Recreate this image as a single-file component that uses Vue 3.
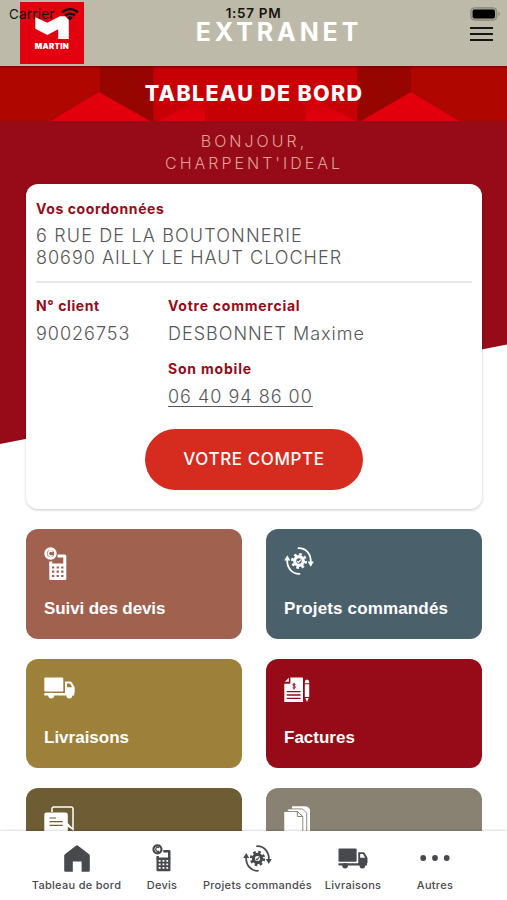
<script setup>
const tiles = [
  { label: 'Suivi des devis', icon: 'devis', tone: 'terracotta' },
  { label: 'Projets commandés', icon: 'projets', tone: 'slate' },
  { label: 'Livraisons', icon: 'truck', tone: 'gold' },
  { label: 'Factures', icon: 'invoice', tone: 'crimson' },
  { label: '', icon: 'chat', tone: 'bronze' },
  { label: '', icon: 'docs', tone: 'stone' },
]

const tabs = [
  { label: 'Tableau de bord', icon: 'home', slot: 'home' },
  { label: 'Devis', icon: 'devis', slot: 'devis' },
  { label: 'Projets commandés', icon: 'projets', slot: 'projets' },
  { label: 'Livraisons', icon: 'truck', slot: 'truck' },
  { label: 'Autres', icon: 'more', slot: 'more' },
]
</script>

<template>
  <div class="screen">
    <!-- Shared icon shapes -->
    <svg class="sprite" aria-hidden="true">
      <symbol id="i-devis" viewBox="0 0 24 34">
        <circle cx="6.5" cy="6.500" r="4.900" fill="none" stroke="currentColor" stroke-width="2.600" />
        <path d="M8.600 4.700a2.500 2.500 0 1 0 0 3.600" fill="none" stroke="currentColor" stroke-width="1.500" />
        <path d="M13.500 8.900h7.300v9M6.800 14.500v4" fill="none" stroke="currentColor" stroke-width="3" stroke-linejoin="round" />
        <path fill-rule="evenodd" fill="currentColor" d="M5.300 16.500h17v15.400q0 1.100-1.100 1.100H6.400q-1.100 0-1.100-1.100zM8 19.400v2.200h2.300v-2.200zM12.600 19.400v2.200h2.300v-2.200zM17.200 19.400v2.200h2.300v-2.200zM8 23.600v2.200h2.300v-2.200zM12.600 23.600v2.200h2.300v-2.200zM17.200 23.600v2.200h2.300v-2.200zM8 27.900v2.200h2.300v-2.200zM12.600 27.900v2.200h2.300v-2.200zM17.200 27.900v2.200h2.300v-2.200z" />
      </symbol>
      <symbol id="i-projets" viewBox="0 0 30 28">
        <g fill="none" stroke="currentColor" stroke-width="1.800" stroke-linecap="round">
          <path d="M14.500 1.200C22 1 27 7 26.800 15" />
          <path d="M15.500 26.800C8 27 3 21 3.200 13" />
        </g>
        <path fill="currentColor" d="M23.600 14.600h6.200l-3.100 5.200zM.2 13.400h6.200L3.300 8.200z" />
        <circle cx="15" cy="14" r="4.300" fill="none" stroke="currentColor" stroke-width="3.200" />
        <circle cx="15" cy="14" r="6.700" fill="none" stroke="currentColor" stroke-width="2.600" stroke-dasharray="2.630 2.630" />
        <path d="M13.200 14.200l1.300 1.200 2.400-2.800" fill="none" stroke="currentColor" stroke-width="1.200" />
      </symbol>
      <symbol id="i-truck" viewBox="0 0 31 22">
        <rect x=".3" y=".5" width="19" height="14" rx="1.200" fill="currentColor" />
        <path fill="currentColor" fill-rule="evenodd" d="M21 4.400h5.200q1.100 0 1.700 1l2.300 4q.5.800.5 1.800v4.600h-.5v2.600h-2a2.900 2.900 0 0 1-5.700 0H10a2.900 2.900 0 0 1-5.600 0H.3v-2.300H21zM23 6.400v3.800h5.200l-1.900-3.300q-.3-.5-.8-.5z" />
        <circle cx="7.200" cy="18.600" r="2.900" fill="currentColor" />
        <circle cx="25.300" cy="18.600" r="2.900" fill="currentColor" />
      </symbol>
      <symbol id="i-invoice" viewBox="0 0 26 26">
        <path fill="currentColor" d="M6.400.4h12q.6 0 .6.600v24H.3V6.700h5.200q.9 0 .9-.9zM4.900.8v4H.9z" />
        <g stroke="var(--hole)" stroke-width="1.300" fill="none">
          <path d="M2.800 14.600h13.800M2.800 18h13.800M2.800 21.400h13.800" />
          <path d="M11.400 7.300q-2.600-.9-2.600.6 0 .9 1.400 1.200 1.400.4 1.200 1.300-.3 1.300-2.800.4M10.100 5.800v6.600" stroke-width="1" />
        </g>
        <path fill="currentColor" d="M20.800 5.200q0-2.600 2.200-2.600t2.200 2.600v1h-4.400zM20.800 7.300h4.400V20h-4.400zM21.200 21h3.600L23 25z" />
      </symbol>
      <symbol id="i-chat" viewBox="0 0 31 32">
        <path d="M8 6V2.800Q8 1 9.800 1H27Q29 1 29 3v20.500L23 18" fill="none" stroke="currentColor" stroke-width="1.500" />
        <path fill="currentColor" d="M2.500 6.500h19q2.300 0 2.300 2.300V17l5.200 6-5.200-2v11H.3V8.800q0-2.300 2.200-2.300z" />
        <path d="M5.500 12h6.500M5.500 15.700h13.200M5.500 19.400h13.200" stroke="var(--hole)" stroke-width="1.200" />
      </symbol>
      <symbol id="i-docs" viewBox="0 0 27 32">
        <path fill="currentColor" d="M8 .3h13.200Q26 1 26 4.800V32H8z" />
        <path fill="currentColor" stroke="var(--hole)" stroke-width=".9" d="M3.800 2.900h14.700l4.200 4.300V33H3.800z" />
        <path fill="currentColor" stroke="var(--hole)" stroke-width=".9" d="M-.2 5.500h13.500l5.500 5V33H-.2z" />
        <path d="M13.300 5.500v5h5.300z" fill="currentColor" stroke="var(--hole)" stroke-width="1" />
      </symbol>
      <symbol id="i-home" viewBox="0 0 26 27">
        <path fill="currentColor" d="M11.900.7q1.100-.8 2.200 0l11 8.500q.7.600.7 1.500v14.800q0 1.200-1.200 1.200h-7V16.500H8.800v10.200H1.400Q.2 26.700.2 25.500V10.700q0-.9.700-1.500z" />
      </symbol>
      <symbol id="i-more" viewBox="0 0 30 8">
        <circle cx="3.200" cy="4" r="2.900" fill="currentColor" />
        <circle cx="15" cy="4" r="2.900" fill="currentColor" />
        <circle cx="26.700" cy="4" r="2.900" fill="currentColor" />
      </symbol>
    </svg>

    <header class="topbar">
      <div class="logo">
        <svg class="logo-mark" viewBox="0 0 34 23">
          <path fill="#fff" d="M.3 1.200l12 5.500L25 .2h5.200L33.800 3.800V23H23.200V13.300L12.300 19 .3 12.800z" />
        </svg>
        <span class="logo-name">MARTIN</span>
      </div>
      <h1 class="app-title">EXTRANET</h1>
      <button class="burger" aria-label="Menu"><i></i><i></i><i></i></button>
      <div class="status">
        <span class="carrier">Carrier</span>
        <svg class="wifi" viewBox="0 0 18 14">
          <g fill="none" stroke="#111" stroke-width="2.300">
            <path d="M1.100 5.400a11.300 11.300 0 0 1 15.800 0M4.100 8.600a7 7 0 0 1 9.800 0" />
          </g>
          <path fill="#111" d="M6.200 10.700a4 4 0 0 1 5.600 0L9 13.500z" />
        </svg>
        <span class="clock">1:57 PM</span>
        <svg class="battery" viewBox="0 0 31 14">
          <rect x=".8" y=".8" width="26" height="12.400" rx="3.600" fill="#a5a195" stroke="#858277" stroke-width="1" />
          <rect x="2.600" y="2.600" width="22.400" height="8.800" rx="1.800" fill="#000" />
          <path d="M28.500 4.500q2.600 2.500 0 5z" fill="#858277" />
        </svg>
      </div>
    </header>

    <div class="banner">
      <svg class="facets" viewBox="0 0 507 55" preserveAspectRatio="none">
        <defs>
          <linearGradient id="facet-fade" x1="0" y1="0" x2="0" y2="1">
            <stop offset="0" stop-color="#c70006" />
            <stop offset="1" stop-color="#e3000d" />
          </linearGradient>
          <linearGradient id="top-shade" x1="0" y1="0" x2="0" y2="1">
            <stop offset="0" stop-color="#500" stop-opacity=".6" />
            <stop offset="1" stop-color="#500" stop-opacity="0" />
          </linearGradient>
        </defs>
        <path fill="#b00600" d="M0 0h100v55H0zM411 0h96v55h-96z" />
        <path fill="#970500" d="M100 0h54v55h-54zM357 0h54v55h-54z" />
        <path fill="#c70006" d="M153.500 0h204v55h-204z" />
        <path fill="#e3000d" d="M51 55l48-29 51 29zM361 55l50-29 48 29z" />
        <path fill="url(#facet-fade)" d="M160 55l45-27v27zM306 55V28l49 27z" />
        <path fill="url(#top-shade)" d="M0 0h507v3H0z" />
      </svg>
      <h2 class="banner-title">TABLEAU DE BORD</h2>
    </div>

    <main class="content">
      <p class="greeting"><span class="hello">BONJOUR,</span><span class="company">CHARPENT'IDEAL</span></p>

      <section class="card">
        <div class="block">
          <h3 class="label l-coord">Vos coordonnées</h3>
          <p class="value address"><span class="addr1">6 RUE DE LA BOUTONNERIE</span><span class="addr2">80690 AILLY LE HAUT CLOCHER</span></p>
        </div>
        <div class="details">
          <div>
            <h3 class="label">N° client</h3>
            <p class="value">90026753</p>
          </div>
          <div>
            <h3 class="label l-com">Votre commercial</h3>
            <p class="value">DESBONNET Maxime</p>
            <h3 class="label mobile">Son mobile</h3>
            <p class="value"><a class="phone">06 40 94 86 00</a></p>
          </div>
        </div>
        <button class="account">VOTRE COMPTE</button>
      </section>

      <section class="tiles">
        <article v-for="t in tiles" :key="t.tone" class="tile" :class="t.tone">
          <svg class="tile-icon" :class="'ti-' + t.icon"><use :href="'#i-' + t.icon" /></svg>
          <span class="tile-label">{{ t.label }}</span>
        </article>
      </section>
    </main>

    <nav class="tabs">
      <a v-for="t in tabs" :key="t.icon" class="tab" :class="'tab-' + t.slot">
        <span class="tab-icon"><svg :class="'ni-' + t.icon"><use :href="'#i-' + t.icon" /></svg></span>
        <span class="tab-label">{{ t.label }}</span>
      </a>
    </nav>
  </div>
</template>

<style>
body { margin: 0; background: #fff; }
</style>

<style scoped>
.screen {
  width: 507px; height: 900px; overflow: hidden;
  display: flex; flex-direction: column;
  font-family: Inter, "Liberation Sans", sans-serif;
  background: #fff; isolation: isolate;
}
.sprite { position: absolute; width: 0; height: 0; }
h1, h2, h3, p { margin: 0; }
button { border: 0; padding: 0; font-family: inherit; }

.topbar {
  position: relative; flex: none; height: 66px; box-sizing: border-box;
  background: #bebaa9;
  display: grid; grid-template-columns: 64px 1fr 64px;
  padding: 0 14px 0 20px; align-items: start;
}
.logo {
  height: 62px; margin-top: 2px; background: #e3000f;
  display: flex; flex-direction: column; align-items: center;
  padding-top: 14px; box-sizing: border-box;
}
.logo-mark { width: 34px; height: 23px; }
.logo-name {
  margin-top: 3px; color: #fff; font-size: 7.800px; line-height: 9px;
  font-weight: 900; letter-spacing: .3px;
}
.app-title {
  justify-self: center; margin-top: 18px; padding-left: 45px;
  color: #fff; font-size: 25px; line-height: 28px; font-weight: 700; letter-spacing: 3.900px;
}
.burger {
  justify-self: end; margin-top: 26.500px; width: 23px;
  display: flex; flex-direction: column; gap: 4px; background: none;
}
.burger i { height: 2.300px; background: #151515; }

.status {
  position: absolute; inset: 0 0 auto 0; height: 26px;
  display: grid; grid-template-columns: auto auto 1fr auto;
  align-items: center; padding: 0 6px 0 9px; color: #16130f;
}
.carrier { font-size: 13.500px; letter-spacing: .2px; line-height: 28px; }
.wifi { width: 18px; height: 14px; margin-left: 6px; }
.clock {
  position: absolute; left: 0; right: 0; text-align: center;
  font-size: 13.500px; font-weight: 600; line-height: 28px; letter-spacing: .7px;
}
.battery { grid-column: 4; width: 31px; height: 14px; }

.banner {
  position: relative; flex: none; height: 55px; box-sizing: border-box; padding-bottom: 2px;
  display: flex; align-items: center; justify-content: center;
}
.facets { position: absolute; inset: 0; width: 100%; height: 100%; z-index: -1; }
.banner-title {
  color: #fff; font-size: 21.500px; line-height: 26px; font-weight: 800;
  letter-spacing: 1.300px; padding-left: 1px;
}

.content { position: relative; flex: 1; min-height: 0; overflow: hidden; padding: 0 25px 0 26px; }
.content::before {
  content: ""; position: absolute; inset: 0 0 auto 0; height: 323px; z-index: -1;
  background: #960b17; clip-path: polygon(0 0, 100% 0, 100% 223.500px, 0 100%);
}
.greeting {
  height: 63px; box-sizing: border-box; padding-top: 9px;
  display: flex; flex-direction: column; align-items: center;
  color: #e0a298; font-size: 16px; line-height: 22px; font-weight: 350;
}
.hello { letter-spacing: 3px; }
.company { letter-spacing: 3px; }

.card {
  height: 325px; box-sizing: border-box; padding: 15px 10px 0;
  display: flex; flex-direction: column;
  border-radius: 12px; background: #fff; box-shadow: 0 1px 3px rgba(0, 0, 0, .22);
}
.label { color: #960b17; font-size: 14px; line-height: 20px; font-weight: 700; letter-spacing: .6px; }
.l-com { letter-spacing: .750px; }
.mobile { letter-spacing: .8px; }
.value {
  color: #55565a; font-size: 18px; line-height: 22px; font-weight: 320;
  letter-spacing: 1px; white-space: nowrap;
}
.block { border-bottom: 2px solid #e6e6e6; padding-bottom: 12px; }
.address { margin-top: 6px; display: flex; flex-direction: column; }
.addr1 { letter-spacing: 1.150px; }
.details { display: grid; grid-template-columns: 132px 1fr; padding-top: 13px; }
.details .value { margin-top: 7px; }
.details .mobile { margin-top: 14px; }
.phone { text-decoration: underline; text-decoration-thickness: 1px; text-underline-offset: 3px; }
.account {
  align-self: center; margin-top: 21px; width: 218px; height: 61px;
  border-radius: 31px; background: #d62b1f; color: #fff;
  font-size: 17px; font-weight: 500; line-height: 59px; letter-spacing: .6px;
}

.tiles { display: grid; grid-template-columns: 216px 216px; gap: 20px 24px; padding-top: 20px; }
.tile {
  height: 109.600px; box-sizing: border-box; padding: 18px;
  border-radius: 12px; color: #fff; background: var(--hole);
  display: flex; flex-direction: column; justify-content: space-between;
}
.terracotta { --hole: #a0614f; }
.slate { --hole: #4a616c; }
.gold { --hole: #9d813a; }
.crimson { --hole: #960b17; }
.bronze { --hole: #6e5c35; }
.stone { --hole: #898273; }
.tile-label { font: 700 17px/24px "Liberation Sans", sans-serif; }
.terracotta .tile-label { letter-spacing: -.1px; }
.slate .tile-label { letter-spacing: .150px; }
.ti-devis { width: 24px; height: 34px; }
.ti-projets { width: 30px; height: 28px; }
.ti-truck { width: 31px; height: 22px; }
.ti-invoice { width: 26px; height: 26px; }
.ti-chat { width: 31px; height: 32px; }
.ti-docs { width: 27px; height: 32px; }

.tabs {
  flex: none; height: 69px; box-sizing: border-box; padding-left: 24px;
  display: flex; background: #fff; color: #47494d; box-shadow: 0 -1px 2px rgba(0, 0, 0, .14);
  z-index: 1;
}
.tab { display: flex; flex-direction: column; align-items: center; padding-top: 10px; }
.tab-home { width: 105px; }
.tab-devis { width: 66px; }
.tab-projets { width: 125px; }
.tab-truck { width: 66px; }
.tab-more { width: 98px; }
.tab-icon { height: 34px; display: flex; align-items: center; }
.tab-label {
  margin-top: 3px; font-size: 11px; line-height: 15px; font-weight: 500;
  letter-spacing: .3px; white-space: nowrap;
}
.ni-home { width: 26px; height: 27px; }
.ni-devis { width: 20px; height: 28px; }
.ni-projets { width: 29px; height: 27px; }
.ni-truck { width: 30px; height: 21px; }
.ni-more { width: 30px; height: 8px; }
</style>
